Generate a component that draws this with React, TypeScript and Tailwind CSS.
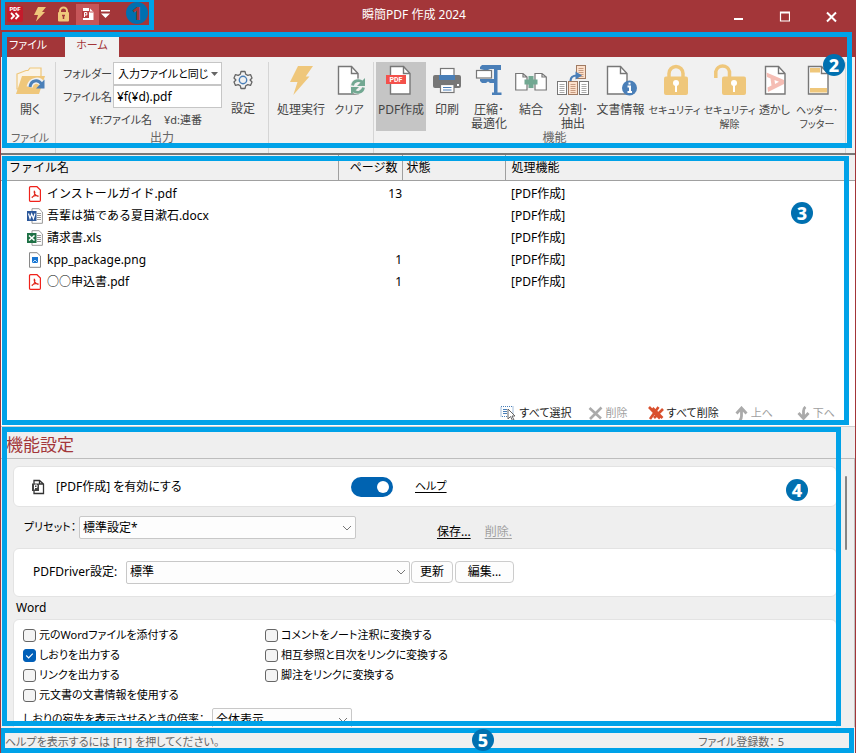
import type { ReactNode } from "react";

const GOLD = "#EFC77B";
const BLUE = "#4A7FB8";
const GREEN = "#72A892";
const LINE = "#777777";

/* ---------- annotation marks ---------- */

function Frame({ className }: { className: string }) {
  return <div aria-hidden="true" className={`pointer-events-none absolute z-10 border-[5px] border-[#00A2E8] ${className}`} />;
}

function Mark({ n, className }: { n: number; className: string }) {
  return (
    <span
      className={`absolute z-20 flex size-[22px] items-center justify-center rounded-full bg-[#0070B0] font-['Noto_Sans',sans-serif] text-[18px] leading-none font-extrabold ${className}`}
    >
      {n}
    </span>
  );
}

/* ---------- icons ---------- */

function Icon({ children }: { children: ReactNode }) {
  return (
    <svg width="32" height="32" viewBox="0 0 32 32" fill="none" className="shrink-0" aria-hidden="true">
      {children}
    </svg>
  );
}

function Page({ x, y = 2.5 }: { x: number; y?: number }) {
  return (
    <g transform={`translate(${x} ${y})`}>
      <path d="M0.5 0H13.5L20 7V27.5H0.5Z" fill="#fff" stroke={LINE} strokeWidth="1.4" />
      <path d="M13.5 0V7H20" stroke={LINE} strokeWidth="1.4" />
    </g>
  );
}

const OpenIcon = () => (
  <Icon>
    <path d="M3 10L12 6.500H14L16 4H27V12L8 25H3Z" fill="#FBF4E6" stroke={GOLD} strokeWidth="1.2" />
    <path d="M8 12H31L25 30H2Z" fill={GOLD} />
    <path d="M15.500 23C17 16 25 14.500 28 20" stroke="#f1f1f1" strokeWidth="6" />
    <path d="M16 23C17 16 24 15 27.500 20" stroke={BLUE} strokeWidth="3" />
    <path d="M30.500 15.500V24.500H22Z" fill={BLUE} />
  </Icon>
);

const GearIcon = () => (
  <svg width="20" height="20" viewBox="0 0 20 20" fill="none" aria-hidden="true">
    <path
      d="M8 1.500H12L12.700 4.200L14.800 5.400L17.500 4.600L19 8L17.100 10L19 12L17.500 15.400L14.800 14.600L12.700 15.800L12 18.500H8L7.300 15.800L5.200 14.600L2.500 15.400L1 12L2.900 10L1 8L2.500 4.600L5.200 5.400L7.300 4.200Z"
      stroke="#666"
      strokeWidth="1.3"
      strokeLinejoin="round"
    />
    <circle cx="10" cy="10" r="3.700" stroke={BLUE} strokeWidth="1.4" />
  </svg>
);

const BoltIcon = () => (
  <Icon>
    <path d="M13 2H28L20.700 12.500H24.500L8.300 31L12.500 18H5Z" fill={GOLD} />
  </Icon>
);

const ClearIcon = () => (
  <Icon>
    <Page x={5} />
    <circle cx="25" cy="22.500" r="8" fill="#f1f1f1" />
    <path d="M19.500 21.500A5.800 5.800 0 0 1 29.500 18.500M30.500 23.500A5.800 5.800 0 0 1 20.500 26.500" stroke={GREEN} strokeWidth="2.800" />
    <path d="M32 14V22H24ZM18 31V23H26Z" fill={GREEN} />
  </Icon>
);

const PdfIcon = () => (
  <Icon>
    <Page x={5} />
    <rect x="1" y="11" width="20" height="9" fill="#F4514B" />
    <text x="11" y="18.200" textAnchor="middle" fontSize="7" fontWeight="700" fontFamily="Roboto, sans-serif" fill="#fff">
      PDF
    </text>
  </Icon>
);

const PrintIcon = () => (
  <Icon>
    <rect x="2" y="11" width="28" height="13" rx="2" fill="#777" />
    <rect x="9.500" y="4.500" width="13.500" height="12" fill="#fff" stroke={LINE} strokeWidth="1.200" />
    <rect x="8" y="11" width="16" height="5" fill={BLUE} />
    <rect x="9.500" y="20.500" width="13.500" height="8" fill="#fff" stroke={LINE} strokeWidth="1.200" />
    <path d="M12 23.500H20.500M12 26H20.500" stroke={BLUE} />
    <rect x="26" y="20" width="2" height="2" fill="#fff" />
  </Icon>
);

const ClampIcon = () => (
  <Icon>
    <path d="M9 1H28V6H24.500V28.500H28.500V31H19V28.500H21V19H17L15 17.500L13 19H9L7 17V15H21V5H17L15 6H11L7 5V3Z" fill={BLUE} />
    <rect x="3.500" y="6.500" width="15" height="7.500" fill="#fff" stroke={LINE} strokeWidth="1.200" />
  </Icon>
);

const MergeIcon = () => (
  <Icon>
    <path d="M0.700 9.500H8L12 13V26H0.700ZM8 9.500V13H12" fill="#fff" stroke={LINE} strokeWidth="1.200" />
    <path d="M20 9.500H27L31.300 13V26H20ZM27 9.500V13H31.300" fill="#fff" stroke={LINE} strokeWidth="1.200" />
    <path d="M13.500 12H18.500V15.500H22.500V20.500H18.500V24H13.500V20.500H9.500V15.500H13.500Z" fill={GREEN} />
  </Icon>
);

function MiniPage({ x, y, tint }: { x: number; y: number; tint?: boolean }) {
  return (
    <g transform={`translate(${x} ${y})`}>
      <rect width="9" height="13" fill={tint ? "#FCE0CB" : "#fff"} stroke={tint ? "#A07A62" : LINE} />
      <path d="M2 3H7M2 5H7M2 7H7M2 9H7M2 11H7" stroke={tint ? "#C79B80" : "#AAA"} />
    </g>
  );
}

const SplitIcon = () => (
  <Icon>
    <MiniPage x={0.5} y={17.5} />
    <MiniPage x={11.5} y={17.5} tint />
    <MiniPage x={22.5} y={17.5} />
    <MiniPage x={19.5} y={1.5} tint />
    <path d="M13.500 17C13.500 13 16 11.500 20 11.500" stroke={BLUE} strokeWidth="2.200" />
    <path d="M18.500 7.500L25 11.500L18.500 15.500Z" fill={BLUE} />
  </Icon>
);

const InfoIcon = () => (
  <Icon>
    <Page x={2} />
    <circle cx="24.500" cy="24" r="7.500" fill={BLUE} />
    <path d="M24.500 18.500V20.500M22.500 22.500H25V28M22.500 28H27" stroke="#fff" strokeWidth="2" />
  </Icon>
);

const LockIcon = () => (
  <Icon>
    <path d="M10 15V9.500A7 7 0 0 1 24 9.500V15" stroke={GOLD} strokeWidth="3.500" />
    <rect x="5" y="12.500" width="24" height="18.500" rx="2" fill={GOLD} />
    <circle cx="17" cy="19" r="3" fill="#fff" />
    <rect x="16" y="20" width="2" height="8" fill="#fff" />
  </Icon>
);

const UnlockIcon = () => (
  <Icon>
    <path d="M1.800 14V7.500A7 7 0 0 1 15.500 7.500V14" stroke={GOLD} strokeWidth="3.500" />
    <rect x="8" y="12.500" width="24" height="18.500" rx="2" fill={GOLD} />
    <circle cx="20" cy="19" r="3" fill="#fff" />
    <rect x="19" y="20" width="2" height="8" fill="#fff" />
  </Icon>
);

const WatermarkIcon = () => (
  <Icon>
    <Page x={6} />
    <path d="M7.500 8.500L25 16V20L9 28L8.500 23.500L12.500 21.500L11.500 14.500L8 13ZM15.500 16L16 20L20 17.800Z" fill="#F5BDB4" fillRule="evenodd" />
  </Icon>
);

const HeaderIcon = () => (
  <Icon>
    <Page x={7} />
    <rect x="9" y="4" width="10" height="4.500" fill={GOLD} />
    <rect x="9" y="24" width="17" height="4.500" fill={GOLD} />
  </Icon>
);

function FileIcon({ kind }: { kind: string }) {
  return (
    <svg width="16" height="16" viewBox="0 0 16 16" fill="none" className="shrink-0" aria-hidden="true">
      {kind === "pdf" && (
        <>
          <path d="M2.500 1.700Q2.500 .7 3.500 .7H10L13.400 4V14.200Q13.400 15.300 12.400 15.300H3.500Q2.500 15.300 2.500 14.300Z" fill="#fff" stroke="#F0221B" strokeWidth="1.200" />
          <path d="M7.300 4.800C8.800 7 7 10 4.800 11.700M7.300 4.800C6.500 7.500 9.500 10.300 11.500 10.300M4.800 11.500C6.500 9.500 10 9.200 11.500 10.300" stroke="#E0251B" strokeWidth="1.200" />
        </>
      )}
      {kind === "png" && (
        <>
          <path d="M2.500 .7H10L13.500 4V15.300H2.500Z" fill="#fff" stroke="#888" />
          <rect x="5" y="5" width="6" height="6" fill="#1976D2" />
          <path d="M5.500 10.500L8 8L10.500 10.500" stroke="#BFE0FF" />
        </>
      )}
      {(kind === "docx" || kind === "xls") && (
        <>
          <path d="M5 .7H12L15.400 4V15.300H5Z" fill="#fff" stroke="#999" />
          <path d="M10 5.500H14M10 7.500H14M10 9.500H14M10 11.500H14" stroke="#999" />
          <rect x="0" y="3" width="9.500" height="10" fill={kind === "docx" ? "#2B579A" : "#1E7145"} />
          {kind === "docx" ? (
            <path d="M1.500 5.500L3 10.500L4.700 6L6.400 10.500L8 5.500" stroke="#fff" strokeWidth="1.200" />
          ) : (
            <path d="M2 5.500L7.500 10.500M7.500 5.500L2 10.500" stroke="#fff" strokeWidth="1.600" />
          )}
        </>
      )}
    </svg>
  );
}

const Chevron = () => (
  <svg width="10" height="6" viewBox="0 0 10 6" fill="none" className="pointer-events-none z-0 col-start-1 row-start-1 mr-1 self-center justify-self-end" aria-hidden="true">
    <path d="M1 1L5 5L9 1" stroke="#777" />
  </svg>
);

/* ---------- controls ---------- */

function RibbonButton({ icon, label, className, active }: { icon: ReactNode; label: string; className: string; active?: boolean }) {
  return (
    <button type="button" className={`flex h-[69px] shrink-0 flex-col items-center gap-[7px] pt-0.5 leading-[14px] ${active ? "bg-[#C5C5C5]" : ""} ${className}`}>
      {icon}
      <span className="text-center whitespace-pre">{label}</span>
    </button>
  );
}

function Combo({ id, value, className }: { id: string; value: string; className: string }) {
  return (
    <div className={`grid h-[23px] shrink-0 ${className}`}>
      <select id={id} className="col-start-1 row-start-1 w-full appearance-none rounded-[2px] border border-[#C8C8C8] bg-[#FDFDFD] pl-[3px] text-[12px] text-black">
        <option>{value}</option>
      </select>
      <Chevron />
    </div>
  );
}

function Check({ label, checked }: { label: string; checked?: boolean }) {
  return (
    <label className="flex h-5 items-center gap-[3px] text-[11px] whitespace-nowrap">
      <span className="grid size-[13px] shrink-0">
        <input
          type="checkbox"
          defaultChecked={checked}
          className="col-start-1 row-start-1 size-[13px] appearance-none rounded-[3px] border border-[#666] bg-[#F4F4F4] checked:border-[#005FB8] checked:bg-[#005FB8]"
        />
        {checked && (
          <svg viewBox="0 0 12 12" fill="none" className="pointer-events-none z-0 col-start-1 row-start-1 size-[13px]" aria-hidden="true">
            <path d="M3 6L5.200 8.200L9 4.200" stroke="#fff" />
          </svg>
        )}
      </span>
      {label}
    </label>
  );
}

/* ---------- data ---------- */

const files = [
  { name: "インストールガイド.pdf", kind: "pdf", pages: "13" },
  { name: "吾輩は猫である夏目漱石.docx", kind: "docx", pages: "" },
  { name: "請求書.xls", kind: "xls", pages: "" },
  { name: "kpp_package.png", kind: "png", pages: "1" },
  { name: "○○申込書.pdf", kind: "pdf", pages: "1" },
];

/* ---------- sections ---------- */

function TitleBar() {
  return (
    <header className="relative flex h-[31px] shrink-0 bg-[#A33639] text-white">
      <div className="flex h-7 flex-1 items-center pl-[6px]">
        <button type="button" aria-label="アプリケーション" className="mr-2.5">
          <svg width="16" height="18" viewBox="0 0 16 18" fill="none" aria-hidden="true">
            <rect y="1" width="16" height="16" rx="2" fill="#C41B2B" />
            <text x="8" y="6" textAnchor="middle" fontSize="6" fontWeight="900" fontFamily="Roboto, sans-serif" fill="#fff">PDF</text>
            <path d="M4 8L7 11L4 14M8.500 8L11.500 11L8.500 14" stroke="#fff" strokeWidth="1.800" />
          </svg>
        </button>
        <button type="button" aria-label="処理実行" className="mr-2.5">
          <svg width="14" height="16" viewBox="0 0 14 16" aria-hidden="true">
            <path d="M5 1H13L9 6H12L3 15.500L5 9H1Z" fill={GOLD} />
          </svg>
        </button>
        <button type="button" aria-label="セキュリティ" className="mr-[6px]">
          <svg width="13" height="16" viewBox="0 0 13 16" fill="none" aria-hidden="true">
            <path d="M3 8V5A3.500 3.500 0 0 1 10 5V8" stroke={GOLD} strokeWidth="2" />
            <rect x="1" y="6" width="11" height="9.500" rx="1" fill={GOLD} />
            <path d="M6.500 9V13M5 9.500H8" stroke="#A33639" strokeWidth="1.500" />
          </svg>
        </button>
        <button type="button" aria-label="PDF作成" className="flex h-[21px] w-[23px] items-center justify-center bg-[#C65659]">
          <svg width="12" height="14" viewBox="0 0 12 14" fill="none" aria-hidden="true">
            <path d="M1 1H7.500L11.500 5V13H1Z" fill="#fff" />
            <path d="M7.500 1V5H11.500" stroke="#C65659" />
            <rect y="4" width="7" height="7" fill="#B93E41" />
            <path d="M2.500 10V5.500H4.800V8H2.500" stroke="#fff" />
          </svg>
        </button>
        <button type="button" aria-label="カスタマイズ" className="ml-0.5">
          <svg width="9" height="8" viewBox="0 0 9 8" fill="#fff" aria-hidden="true">
            <path d="M0 0H9V1.500H0ZM0 3.500H9L4.500 8Z" />
          </svg>
        </button>
      </div>
      <h1 className="flex h-[30px] items-center pr-4">瞬簡PDF 作成 2024</h1>
      <div className="flex flex-1 items-center justify-end gap-9 pt-0.5 pr-[18px]">
        <button type="button" aria-label="最小化">
          <svg width="11" height="12" viewBox="0 0 11 12" aria-hidden="true"><path d="M2 7H11V9H2Z" fill="#fff" /></svg>
        </button>
        <button type="button" aria-label="最大化">
          <svg width="11" height="12" viewBox="0 0 11 12" fill="none" aria-hidden="true"><path d="M1.500 1V10H10.500V1ZM1 2H11" stroke="#fff" strokeWidth="1.200" /></svg>
        </button>
        <button type="button" aria-label="閉じる">
          <svg width="11" height="12" viewBox="0 0 11 12" fill="none" aria-hidden="true"><path d="M1 1.500L10 10.500M10 1.500L1 10.500" stroke="#fff" strokeWidth="2" /></svg>
        </button>
      </div>
      <Frame className="top-[-3px] left-[-1px] h-[33px] w-[154px]" />
      <Mark n={1} className="top-0.5 left-[125px] text-[#A33639]" />
    </header>
  );
}

function Ribbon() {
  return (
    <section aria-label="リボン" className="relative flex h-[122px] shrink-0 flex-col [font-feature-settings:'palt']">
      <nav className="flex h-[26px] items-end bg-[#A33639] text-[11px]">
        <button type="button" className="h-5 w-16 pr-2.5 pb-1 text-white">ファイル</button>
        <button type="button" className="h-5 w-[54px] bg-[#F1F1F1] pb-1 text-[#A33639]">ホーム</button>
      </nav>
      <div className="flex flex-1 bg-[#F1F1F1] pt-[5px] leading-[14px] text-[#444]">
        <div className="flex w-[55px] flex-col items-center border-r border-[#D5D5D5] pl-1">
          <RibbonButton icon={<OpenIcon />} label="開く" className="w-10" />
          <span className="text-[11px] text-[#666]">ファイル</span>
        </div>
        <div className="flex w-[213px] flex-col items-center border-r border-[#D5D5D5]">
          <div className="flex h-[69px] w-full">
            <div className="flex w-[166px] flex-col items-end text-[11px]">
              <div className="flex h-[23px] items-center">
                <label htmlFor="folder" className="w-[50px] whitespace-nowrap">フォルダー</label>
                <div className="grid h-[23px] w-[109px]">
                  <select id="folder" className="col-start-1 row-start-1 w-full appearance-none border border-[#C6C6C6] bg-white pr-3 pl-1 text-[11px] text-black">
                    <option>入力ファイルと同じ</option>
                  </select>
                  <svg width="7" height="4" viewBox="0 0 7 4" className="pointer-events-none z-0 col-start-1 row-start-1 mr-1 self-center justify-self-end" aria-hidden="true">
                    <path d="M0 0H7L3.500 4Z" fill="#666" />
                  </svg>
                </div>
              </div>
              <div className="flex h-[23px] items-center">
                <label htmlFor="fname" className="w-[50px] whitespace-nowrap">ファイル名</label>
                <input id="fname" defaultValue="¥f(¥d).pdf" className="h-[23px] w-[109px] border border-[#C6C6C6] bg-white px-[3px] text-[12px] text-black" />
              </div>
              <p className="flex h-[23px] items-center gap-3 pr-5 whitespace-nowrap">
                <span>¥f:ファイル名</span>
                <span>¥d:連番</span>
              </p>
            </div>
            <button type="button" className="flex w-[42px] flex-col items-center gap-3 pt-2">
              <GearIcon />
              <span>設定</span>
            </button>
          </div>
          <span className="text-[#666]">出力</span>
        </div>
        <div className="flex w-[105px] items-start border-r border-[#D5D5D5] pl-[5px]">
          <RibbonButton icon={<BoltIcon />} label="処理実行" className="w-[54px]" />
          <RibbonButton icon={<ClearIcon />} label="クリア" className="w-[42px] text-[11px]" />
        </div>
        <div className="flex w-[472px] flex-col items-start border-r border-[#D5D5D5] pl-[2px]">
          <div className="flex">
            <RibbonButton icon={<PdfIcon />} label="PDF作成" className="w-[50px]" active />
            <RibbonButton icon={<PrintIcon />} label="印刷" className="w-[42px]" />
            <RibbonButton icon={<ClampIcon />} label={"圧縮･\n最適化"} className="w-[42px]" />
            <RibbonButton icon={<MergeIcon />} label="結合" className="w-[42px]" />
            <RibbonButton icon={<SplitIcon />} label={"分割･\n抽出"} className="w-[42px]" />
            <RibbonButton icon={<InfoIcon />} label="文書情報" className="w-[53px]" />
            <RibbonButton icon={<LockIcon />} label="セキュリティ" className="w-[55px] text-[10px]" />
            <RibbonButton icon={<UnlockIcon />} label={"セキュリティ\n解除"} className="w-[55px] text-[10px]" />
            <RibbonButton icon={<WatermarkIcon />} label="透かし" className="w-[35px] text-[11px]" />
            <RibbonButton icon={<HeaderIcon />} label={"ヘッダー･\nフッター"} className="w-[50px] text-[10px]" />
          </div>
          <span className="w-[357px] text-center text-[#666]">機能</span>
        </div>
      </div>
      <Frame className="top-px right-[3px] bottom-[5px] left-px" />
      <Mark n={2} className="top-[23px] right-[10px] text-white" />
    </section>
  );
}

function FileList() {
  return (
    <section aria-label="ファイル一覧" className="relative flex h-[273px] shrink-0 flex-col border-t-2 border-[#777] bg-white text-black">
      <table className="w-full table-fixed border-collapse text-left leading-[22px]">
        <colgroup>
          <col className="w-[337px]" />
          <col className="w-16" />
          <col className="w-[103px]" />
          <col />
        </colgroup>
        <thead className="bg-[#F0F0F0]">
          <tr className="h-[25px] border-b border-[#A0A0A0] [&>th]:font-normal">
            <th className="border-r border-[#A0A0A0] pt-0.5 pl-2">ファイル名</th>
            <th className="border-r border-[#A0A0A0] pt-0.5 pr-1 text-right">ページ数</th>
            <th className="border-r border-[#A0A0A0] pt-0.5 pl-1">状態</th>
            <th className="pt-0.5 pl-1.5">処理機能</th>
          </tr>
        </thead>
        <tbody className="[&>tr:first-child>td]:pt-0.5">
          {files.map((f) => (
            <tr key={f.name} className="h-[22px]">
              <td className="pl-[26px]">
                <span className="flex items-center gap-1">
                  <FileIcon kind={f.kind} />
                  {f.name}
                </span>
              </td>
              <td className="text-right">{f.pages}</td>
              <td />
              <td className="pl-1.5">[PDF作成]</td>
            </tr>
          ))}
        </tbody>
      </table>
      <div className="mt-auto mb-[3px] flex h-5 items-center justify-end pr-5 text-[11px] leading-4 [font-feature-settings:'palt'] [&>button]:flex [&>button]:items-center [&>button]:gap-[3px]">
        <button type="button" className="mr-4 text-[#222]">
          <svg width="16" height="16" viewBox="0 0 16 16" fill="none" aria-hidden="true">
            <rect x="1" y="1.500" width="12" height="10" stroke={BLUE} strokeDasharray="1 1" />
            <path d="M3 4.500H7M3 6.500H7M3 8.500H7" stroke={BLUE} />
            <path d="M8 4V14L10.500 11.500L12.500 15.500L14 15L12 11H15Z" fill="#fff" stroke="#666" />
          </svg>
          すべて選択
        </button>
        <button type="button" disabled className="mr-5 text-[#A0A0A0]">
          <svg width="15" height="14" viewBox="0 0 15 14" fill="none" aria-hidden="true">
            <path d="M1.500 2L13 12.500M13.500 1.500L2 13" stroke="#AAA" strokeWidth="2.600" />
          </svg>
          削除
        </button>
        <button type="button" className="mr-4 text-[#222]">
          <svg width="16" height="16" viewBox="0 0 16 16" fill="none" aria-hidden="true">
            <path d="M1 2L12 13.500M10.500 2L2 14M4.500 3L14.500 13M15 4L6 13" stroke="#D9502E" strokeWidth="2.600" />
          </svg>
          すべて削除
        </button>
        <button type="button" disabled className="mr-6 text-[#A0A0A0]">
          <svg width="13" height="15" viewBox="0 0 13 15" fill="none" aria-hidden="true">
            <path d="M1.500 7.500L6.500 2L11.500 7.500M6.500 3V10Q6.500 13 4.500 14.500" stroke="#AAA" strokeWidth="2.800" />
          </svg>
          上へ
        </button>
        <button type="button" disabled className="text-[#A0A0A0]">
          <svg width="13" height="15" viewBox="0 0 13 15" fill="none" aria-hidden="true">
            <path d="M1.500 7L6.500 12.500L11.500 7M6.500 12V5Q6.500 2.500 8.500 1" stroke="#AAA" strokeWidth="2.800" />
          </svg>
          下へ
        </button>
      </div>
      <Frame className="top-px right-[6px] bottom-px left-px" />
      <Mark n={3} className="top-[47px] right-[42px] text-white" />
    </section>
  );
}

function Settings() {
  return (
    <section aria-label="機能設定" className="relative flex min-h-0 flex-1 flex-col border-t border-[#D0D0D0] bg-[#EFEFEF] text-black [font-feature-settings:'palt']">
      <h2 className="flex h-8 shrink-0 items-center border-b border-[#BDBDBD] pt-1 pl-[5px] text-[17px] text-[#A33639]">機能設定</h2>
      <div className="flex min-h-0 flex-1">
        <div className="mt-[7px] mr-1.5 ml-3 min-w-0 flex-1 overflow-hidden">
          <div className="flex h-[41px] items-center rounded-md border border-[#E3E3E3] bg-white pl-[17px]">
            <svg width="15" height="16" viewBox="0 0 15 16" fill="none" className="mr-[10px] shrink-0" aria-hidden="true">
              <path d="M3 5V1.500H8.500L12.500 5V14.500H3V11M8.500 1.500V5H12.500" stroke="#333" strokeWidth="1.300" />
              <rect x="1" y="4.500" width="7" height="7.500" fill="#444" />
              <path d="M3.500 10.500V6H6V8.500H3.500" stroke="#fff" />
            </svg>
            <label htmlFor="enable" className="w-[295px]">[PDF作成] を有効にする</label>
            <input
              id="enable"
              type="checkbox"
              role="switch"
              defaultChecked
              className="flex h-5 w-[42px] shrink-0 appearance-none items-center justify-end rounded-full bg-[#0063B1] pr-1 before:size-3 before:rounded-full before:bg-white"
            />
            <a href="#help" className="ml-[22px] text-[11px] whitespace-nowrap underline underline-offset-2">ヘルプ</a>
          </div>
          <div className="flex h-[41px] items-center pl-[11px]">
            <label htmlFor="preset" className="w-[55px] text-[11px] whitespace-nowrap">プリセット：</label>
            <Combo id="preset" value="標準設定*" className="w-[277px]" />
            <div className="ml-[81px] flex gap-3.5 pt-2">
              <a href="#save" className="underline underline-offset-2">保存...</a>
              <a href="#delete" aria-disabled="true" className="text-[#A0A0A0] underline underline-offset-2">削除.</a>
            </div>
          </div>
          <div className="flex h-[49px] items-center rounded-md border border-[#E3E3E3] bg-white pb-px pl-[19px] [&>button]:h-[22px] [&>button]:rounded [&>button]:border [&>button]:border-[#CCC] [&>button]:bg-[#FDFDFD]">
            <label htmlFor="driver" className="w-[93px] whitespace-nowrap">PDFDriver設定:</label>
            <Combo id="driver" value="標準" className="w-[284px]" />
            <button type="button" className="ml-px w-[42px]">更新</button>
            <button type="button" className="ml-0.5 w-[59px]">編集...</button>
          </div>
          <h3 className="flex h-[22px] items-center pl-[3px]">Word</h3>
          <div className="rounded-md border border-[#E3E3E3] bg-white pt-[5px] pl-[9px]">
            <div className="flex">
              <div className="flex w-[242px] flex-col">
                <Check label="元のWordファイルを添付する" />
                <Check label="しおりを出力する" checked />
                <Check label="リンクを出力する" />
                <Check label="元文書の文書情報を使用する" />
              </div>
              <div className="flex flex-col">
                <Check label="コメントをノート注釈に変換する" />
                <Check label="相互参照と目次をリンクに変換する" />
                <Check label="脚注をリンクに変換する" />
              </div>
            </div>
            <div className="flex items-center pt-[3px]">
              <label htmlFor="zoom" className="w-[189px] text-[11px] whitespace-nowrap">しおりの宛先を表示させるときの倍率：</label>
              <Combo id="zoom" value="全体表示" className="w-[140px]" />
            </div>
          </div>
        </div>
        <div className="flex w-3 shrink-0 justify-start border-r border-[#C0C0C0] pt-[17px] pl-0.5">
          <div className="h-[74px] w-0.5 rounded bg-[#858585]" />
        </div>
      </div>
      <Frame className="top-0 right-[14px] bottom-px left-px" />
      <Mark n={4} className="top-[52px] right-[47px] text-white" />
    </section>
  );
}

export default function App() {
  return (
    <main className="flex h-screen w-full flex-col overflow-hidden border-x border-[#A33639] bg-[#F0F0F0] font-['Noto_Sans','Noto_Sans_CJK_JP',sans-serif] text-[12px]">
      <TitleBar />
      <Ribbon />
      <FileList />
      <Settings />
      <footer className="relative flex h-[26px] shrink-0 items-center justify-between pt-[5px] pr-[71px] pl-1 text-[11px] text-[#666] [font-feature-settings:'palt']">
        <span>ヘルプを表示するには [F1] を押してください。</span>
        <span className="whitespace-pre">ファイル登録数： 5</span>
        <Frame className="top-px right-px bottom-0 -left-px" />
        <Mark n={5} className="top-[2px] left-[471px] text-white" />
      </footer>
    </main>
  );
}
